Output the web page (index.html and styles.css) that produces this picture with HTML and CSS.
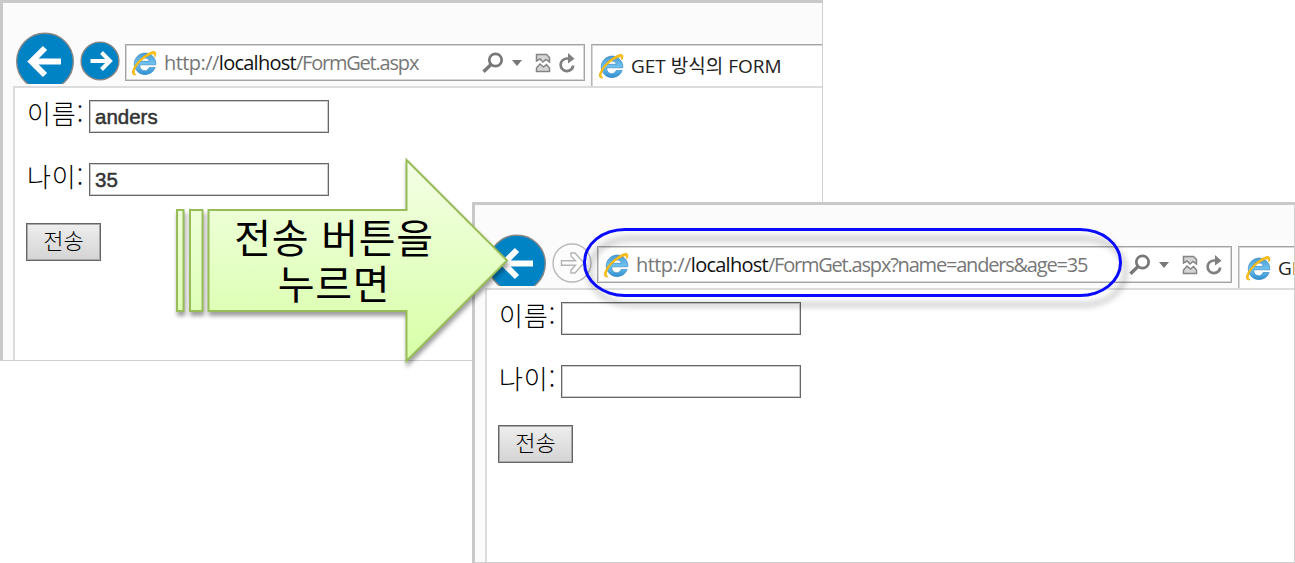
FILE: index.html
```html
<!DOCTYPE html>
<html lang="ko">
<head>
<meta charset="utf-8">
<title>GET 방식의 FORM</title>
<link rel="stylesheet" href="styles.css">
</head>
<body>
<svg class="defs" width="0" height="0">
  <defs>
    <linearGradient id="ieBlue" x1="0" y1="0" x2="0" y2="1"><stop offset="0" stop-color="#4a9bd3"/><stop offset=".5" stop-color="#6fc3f0"/><stop offset="1" stop-color="#2f8fd0"/></linearGradient>
    <linearGradient id="green" x1="0" y1="0" x2="0" y2="1"><stop offset="0" stop-color="#f4ffe6"/><stop offset="1" stop-color="#d7ffa6"/></linearGradient>
    <linearGradient id="greenBar" x1="0" y1="0" x2="0" y2="1"><stop offset="0" stop-color="#edffd8"/><stop offset="1" stop-color="#dfffb7"/></linearGradient>
    <symbol id="back" viewBox="0 0 60 52"><circle cx="30" cy="29.500" r="28.300" fill="#0083c5" stroke="#8b8682" stroke-width="1.400"/><path d="M15.500 29.500H46M30 16L16.500 29.500L30 43" fill="none" stroke="#fff" stroke-width="6"/></symbol>
    <symbol id="forward" viewBox="0 0 40 40"><circle cx="20" cy="20" r="18.900" fill="#0083c5" stroke="#8b8682" stroke-width="1.400"/><path d="M10.500 20H30M21.500 11.500L30 20L21.500 28.500" fill="none" stroke="#fff" stroke-width="4"/></symbol>
    <symbol id="forwardOff" viewBox="0 0 40 40"><circle cx="20" cy="20" r="19" fill="#fcfcfc" stroke="#b9b9b9" stroke-width="1.400"/><path d="M9.500 17.700H23.500L19 13V10H23L32 20L23 30H19V27L23.500 22.300H9.500Z" fill="#fff" stroke="#b4b4b4" stroke-width="1.400"/></symbol>
    <symbol id="ie" viewBox="0 0 26 26"><path d="M18.200 17.500H24.200A10.800 10.800 0 1 1 24.800 14.800H9A4.800 4.800 0 0 0 18.200 17.500ZM9 11.300H18.400A4.800 4.300 0 0 0 9 11.300Z" fill="url(#ieBlue)" fill-rule="evenodd" stroke="#2b7fbd" stroke-width=".6"/><path d="M5 24.500C1.500 26 .2 22.800 2.700 18.300C6 11 14 4.500 20.500 2C24.600 .7 26 2.300 23.800 6.800C24 3.700 22.500 3.200 19.500 4.600C13 7.500 6.800 13 4.300 18.500C2.700 22 2.700 24 5 24.500Z" fill="#fcc81e" stroke="#f2ac0a" stroke-width=".9"/></symbol>
    <symbol id="search" viewBox="0 0 22 22"><circle cx="13.500" cy="8" r="6.200" fill="none" stroke="#777" stroke-width="2.700"/><path d="M9 12.500L1.500 19.800" stroke="#777" stroke-width="3.300"/></symbol>
    <symbol id="broken" viewBox="0 0 16 20"><path d="M1.500 8V1.500H11.500L14.500 4.500V9L11 6.500L8 9L5 6Z" fill="#d5d5d5" stroke="#858585" stroke-width="1.500"/><path d="M1.500 18.500V15L5 11L8.500 14L11.500 11.500L14.500 15V18.500Z" fill="#d5d5d5" stroke="#858585" stroke-width="1.500"/></symbol>
    <symbol id="reload" viewBox="0 0 18 20"><path d="M11.500 5.500H8.700A6.300 6.300 0 1 0 15.200 12.500" fill="none" stroke="#808080" stroke-width="2.700"/><path d="M10 0L16.500 5.700L10 10.500Z" fill="#808080"/></symbol>
  </defs>
</svg>

<main class="desktop">
  <section class="window first">
    <header class="toolbar">
      <svg class="back"><use href="#back"/></svg>
      <svg class="forward"><use href="#forward"/></svg>
      <div class="address">
        <svg class="ie"><use href="#ie"/></svg>
        <span class="url"><span class="scheme">http://</span><b>localhost</b>/FormGet.aspx</span>
        <span class="tools"><svg class="search"><use href="#search"/></svg><i class="caret"></i><svg class="broken"><use href="#broken"/></svg><svg class="reload"><use href="#reload"/></svg></span>
      </div>
      <div class="tab"><svg class="ie"><use href="#ie"/></svg><span class="title">GET 방식의 FORM</span></div>
    </header>
    <form class="page">
      <label class="row"><span class="name">이름:</span><input class="field" type="text" value="anders"></label>
      <label class="row"><span class="name">나이:</span><input class="field" type="text" value="35"></label>
      <button class="send" type="button">전송</button>
    </form>
  </section>

  <section class="window second">
    <header class="toolbar">
      <svg class="back"><use href="#back"/></svg>
      <svg class="forward"><use href="#forwardOff"/></svg>
      <div class="address">
        <svg class="ie"><use href="#ie"/></svg>
        <span class="url"><span class="scheme">http://</span><b>localhost</b>/FormGet.aspx?name=anders&amp;age=35</span>
        <span class="tools"><svg class="search"><use href="#search"/></svg><i class="caret"></i><svg class="broken"><use href="#broken"/></svg><svg class="reload"><use href="#reload"/></svg></span>
      </div>
      <div class="tab"><svg class="ie"><use href="#ie"/></svg><span class="title">GE</span></div>
    </header>
    <form class="page">
      <label class="row"><span class="name">이름:</span><input class="field" type="text"></label>
      <label class="row"><span class="name">나이:</span><input class="field" type="text"></label>
      <button class="send" type="button">전송</button>
    </form>
  </section>

  <div class="highlight"></div>

  <div class="callout">
    <svg class="arrow" viewBox="0 0 345 220">
      <g stroke="#98bc58" stroke-width="2">
        <rect x="7" y="60" width="6.500" height="101" fill="url(#greenBar)"/>
        <rect x="20" y="60" width="12.500" height="101" fill="url(#greenBar)"/>
        <path d="M38.500 60H236.500V10L337 110.500L236.500 211V161H38.500Z" fill="url(#green)"/>
      </g>
    </svg>
    <p class="message"><span>전송 버튼을</span><span>누르면</span></p>
  </div>
</main>
</body>
</html>
```

FILE: styles.css
```css
body {
  margin: 0;
  background: #fff;
  font-family: "Open Sans", "Noto Sans CJK KR", sans-serif;
}

.defs { position: absolute; }

.desktop {
  position: relative;
  width: 1295px;
  height: 563px;
  overflow: hidden;
}

.window {
  position: absolute;
  box-sizing: border-box;
  display: flex;
  flex-direction: column;
  width: 823px;
  height: 361px;
  overflow: hidden;
  background: #fbfbfb;
  border: 1px solid #d0d0d0;
  border-top: 3px solid #c9c9c9;
  border-left: 3px solid #c9c9c9;
}

.first { left: 0; top: 0; }
.second { left: 472px; top: 202px; }

.toolbar {
  display: flex;
  align-items: flex-start;
  flex: none;
  box-sizing: border-box;
  height: 83px;
  padding: 28px 0 0 12px;
}

.toolbar svg { display: block; flex: none; }
.toolbar .back { width: 60px; height: 52px; margin-top: 1px; }
.toolbar .forward { width: 40px; height: 40px; margin: 10px 0 0 5px; }

.address {
  display: flex;
  align-items: center;
  flex: none;
  box-sizing: border-box;
  width: 460px;
  height: 37px;
  margin: 13px 0 0 5px;
  padding: 0 8px 0 5px;
  border: 1px solid #a4a4a4;
  box-shadow: inset 0 0 0 1px #d6d6d6;
  background: #fff;
}

.second .address { width: 635px; }

.ie { width: 26px; height: 26px; }

.url {
  margin: 0 auto 0 7px;
  color: #777;
  font-size: 20px;
  line-height: 28px;
  letter-spacing: -1.2px;
  white-space: nowrap;
}

.url .scheme { letter-spacing: -0.55px; }

.url b {
  color: #111;
  font-weight: 400;
  letter-spacing: -0.75px;
}

.tools { display: flex; align-items: center; }
.search { width: 22px; height: 22px; }

.caret {
  margin: 0 13px 0 8px;
  border: 5.5px solid transparent;
  border-top: 6px solid #777;
  border-bottom: 0;
}

.broken { width: 16px; height: 20px; margin-right: 7px; }
.reload { width: 18px; height: 20px; }

.tab {
  display: flex;
  align-items: center;
  flex: 1 0 auto;
  box-sizing: border-box;
  height: 42px;
  margin: 13px 0 0 6px;
  padding: 0 0 0 6px;
  border-top: 1px solid #a4a4a4;
  border-left: 1px solid #b4b4b4;
  box-shadow: inset 1px 1px 0 #d6d6d6;
  background: #fff;
}

.title {
  margin-left: 7px;
  padding-top: 1px;
  color: #222;
  font-size: 19px;
  line-height: 26px;
  letter-spacing: 0;
  white-space: nowrap;
}

.page {
  display: flex;
  flex-direction: column;
  align-items: flex-start;
  flex: 1;
  gap: 29px;
  margin: 0 0 0 10px;
  padding: 12px 0 0 11px;
  border-top: 2px solid #dcdcdc;
  border-left: 2px solid #dcdcdc;
  background: #fff;
}

.row { display: flex; align-items: flex-start; height: 34px; }

.name {
  width: 63px;
  color: #000;
  font-family: "Noto Sans CJK KR", sans-serif;
  font-size: 26px;
  font-weight: 300;
  line-height: 26px;
  letter-spacing: 0.9px;
  text-indent: 1px;
}

.field {
  box-sizing: border-box;
  width: 240px;
  height: 33px;
  padding: 0 5px;
  border: 1px solid #666;
  border-radius: 0;
  box-shadow: inset 0 0 0 1px #ccc;
  background: #fff;
  color: #333;
  font-family: "Liberation Sans", sans-serif;
  font-size: 20.5px;
  -webkit-text-stroke: 0.5px #333;
}

.send {
  width: 75px;
  height: 38px;
  margin-top: -3px;
  padding: 0 0 6px;
  border: 1px solid #666;
  border-radius: 0;
  box-shadow: inset 0 0 0 1px #a9a9a9;
  background: linear-gradient(#eeeeee, #d4d4d4);
  color: #000;
  font-family: "Noto Sans CJK KR", sans-serif;
  font-size: 22px;
  font-weight: 300;
  line-height: 28px;
}

.highlight {
  position: absolute;
  left: 583px;
  top: 228px;
  box-sizing: border-box;
  width: 539px;
  height: 69px;
  border: 3px solid #0a0aff;
  border-radius: 42px / 34px;
  filter: drop-shadow(5px 9px 3px rgba(0, 0, 0, 0.32));
}

.callout {
  position: absolute;
  left: 170px;
  top: 150px;
  display: grid;
  width: 345px;
  height: 220px;
}

.arrow {
  grid-area: 1 / 1;
  width: 345px;
  height: 220px;
  filter: drop-shadow(1px 4px 2px rgba(0, 0, 0, 0.38));
}

.message {
  grid-area: 1 / 1;
  position: relative;
  display: flex;
  flex-direction: column;
  align-items: center;
  width: 202px;
  margin: 63px 0 0 63px;
  color: #000;
  font-family: "Noto Sans CJK KR", sans-serif;
  font-size: 40px;
  line-height: 46px;
  letter-spacing: 0.7px;
  white-space: nowrap;
}
```
